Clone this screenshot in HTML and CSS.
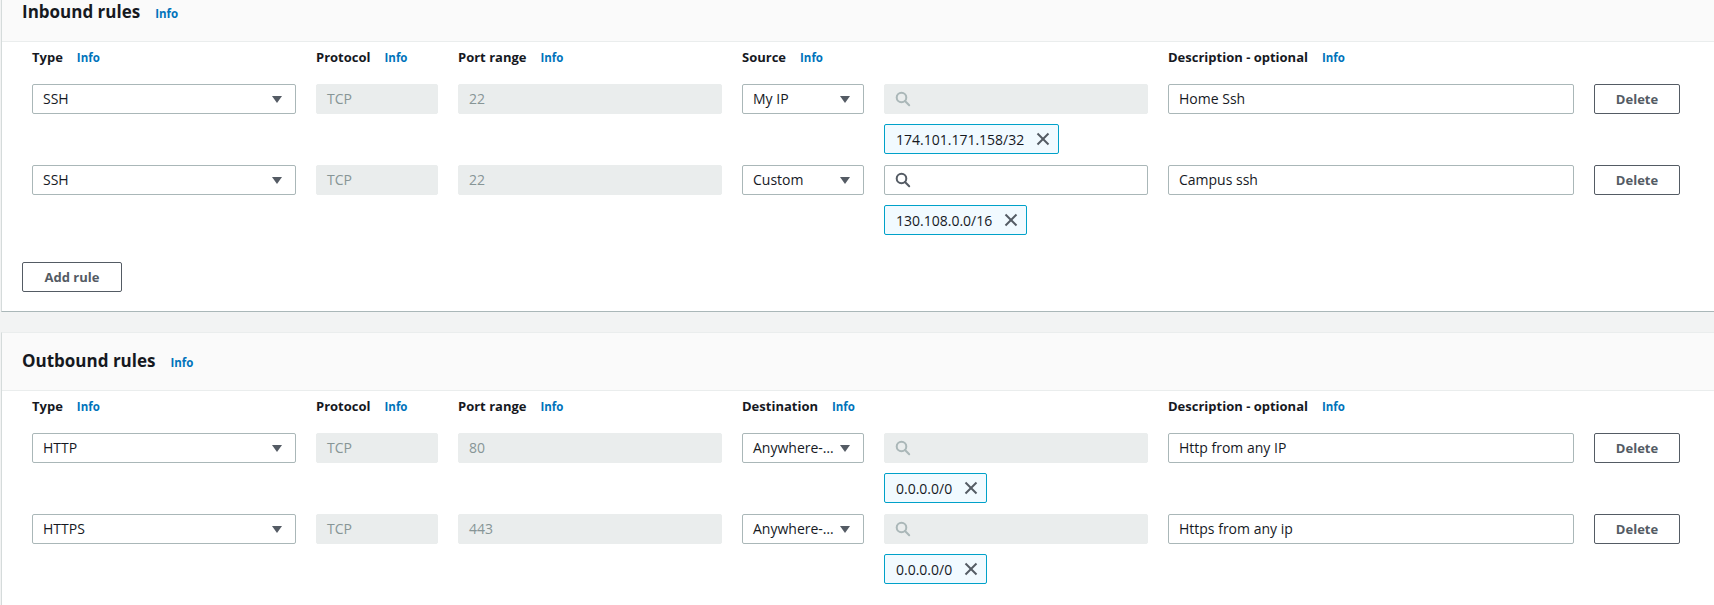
FILE: index.html
```html
<!DOCTYPE html>
<html lang="en">
<head>
<meta charset="utf-8">
<title>Security group rules</title>
<link rel="stylesheet" href="styles.css">
</head>
<body>
<div class="page">
  <section class="panel panel-first">
    <header class="panel-head">
      <h2 class="panel-title">Inbound rules</h2><a class="info info-title">Info</a>
    </header>
    <div class="panel-body">
      <div class="rules">
        <div class="cols labels">
          <div class="label">Type<a class="info">Info</a></div>
          <div class="label">Protocol<a class="info">Info</a></div>
          <div class="label">Port range<a class="info">Info</a></div>
          <div class="label">Source<a class="info">Info</a></div>
          <div></div>
          <div class="label">Description - optional<a class="info">Info</a></div>
          <div></div>
        </div>

        <div class="cols rule">
          <div class="select"><span class="select-text">SSH</span><svg class="caret" width="10" height="7" viewBox="0 0 10 7"><polygon points="0,0 10,0 5,7"/></svg></div>
          <div class="input disabled">TCP</div>
          <div class="input disabled">22</div>
          <div class="select"><span class="select-text">My IP</span><svg class="caret" width="10" height="7" viewBox="0 0 10 7"><polygon points="0,0 10,0 5,7"/></svg></div>
          <div class="search-cell">
            <div class="search disabled"><svg class="mag" width="16" height="16" viewBox="0 0 16 16"><circle cx="6.5" cy="6.5" r="4.8"/><line x1="10" y1="10" x2="14.2" y2="14.2"/></svg></div>
            <div class="chip"><span>174.101.171.158/32</span><svg class="chip-x" width="14" height="14" viewBox="0 0 14 14"><line x1="1.5" y1="1.5" x2="12.5" y2="12.5"/><line x1="12.5" y1="1.5" x2="1.5" y2="12.5"/></svg></div>
          </div>
          <div class="input">Home Ssh</div>
          <button class="btn btn-delete">Delete</button>
        </div>

        <div class="cols rule">
          <div class="select"><span class="select-text">SSH</span><svg class="caret" width="10" height="7" viewBox="0 0 10 7"><polygon points="0,0 10,0 5,7"/></svg></div>
          <div class="input disabled">TCP</div>
          <div class="input disabled">22</div>
          <div class="select"><span class="select-text">Custom</span><svg class="caret" width="10" height="7" viewBox="0 0 10 7"><polygon points="0,0 10,0 5,7"/></svg></div>
          <div class="search-cell">
            <div class="search"><svg class="mag" width="16" height="16" viewBox="0 0 16 16"><circle cx="6.5" cy="6.5" r="4.8"/><line x1="10" y1="10" x2="14.2" y2="14.2"/></svg></div>
            <div class="chip"><span>130.108.0.0/16</span><svg class="chip-x" width="14" height="14" viewBox="0 0 14 14"><line x1="1.5" y1="1.5" x2="12.5" y2="12.5"/><line x1="12.5" y1="1.5" x2="1.5" y2="12.5"/></svg></div>
          </div>
          <div class="input">Campus ssh</div>
          <button class="btn btn-delete">Delete</button>
        </div>
      </div>
      <button class="btn btn-add">Add rule</button>
    </div>
  </section>

  <section class="panel panel-last">
    <header class="panel-head">
      <h2 class="panel-title">Outbound rules</h2><a class="info info-title">Info</a>
    </header>
    <div class="panel-body">
      <div class="rules">
        <div class="cols labels">
          <div class="label">Type<a class="info">Info</a></div>
          <div class="label">Protocol<a class="info">Info</a></div>
          <div class="label">Port range<a class="info">Info</a></div>
          <div class="label">Destination<a class="info">Info</a></div>
          <div></div>
          <div class="label">Description - optional<a class="info">Info</a></div>
          <div></div>
        </div>

        <div class="cols rule">
          <div class="select"><span class="select-text">HTTP</span><svg class="caret" width="10" height="7" viewBox="0 0 10 7"><polygon points="0,0 10,0 5,7"/></svg></div>
          <div class="input disabled">TCP</div>
          <div class="input disabled">80</div>
          <div class="select" title="Anywhere-IPv4"><span class="select-text">Anywhere-…</span><svg class="caret" width="10" height="7" viewBox="0 0 10 7"><polygon points="0,0 10,0 5,7"/></svg></div>
          <div class="search-cell">
            <div class="search disabled"><svg class="mag" width="16" height="16" viewBox="0 0 16 16"><circle cx="6.5" cy="6.5" r="4.8"/><line x1="10" y1="10" x2="14.2" y2="14.2"/></svg></div>
            <div class="chip"><span>0.0.0.0/0</span><svg class="chip-x" width="14" height="14" viewBox="0 0 14 14"><line x1="1.5" y1="1.5" x2="12.5" y2="12.5"/><line x1="12.5" y1="1.5" x2="1.5" y2="12.5"/></svg></div>
          </div>
          <div class="input">Http from any IP</div>
          <button class="btn btn-delete">Delete</button>
        </div>

        <div class="cols rule">
          <div class="select"><span class="select-text">HTTPS</span><svg class="caret" width="10" height="7" viewBox="0 0 10 7"><polygon points="0,0 10,0 5,7"/></svg></div>
          <div class="input disabled">TCP</div>
          <div class="input disabled">443</div>
          <div class="select" title="Anywhere-IPv4"><span class="select-text">Anywhere-…</span><svg class="caret" width="10" height="7" viewBox="0 0 10 7"><polygon points="0,0 10,0 5,7"/></svg></div>
          <div class="search-cell">
            <div class="search disabled"><svg class="mag" width="16" height="16" viewBox="0 0 16 16"><circle cx="6.5" cy="6.5" r="4.8"/><line x1="10" y1="10" x2="14.2" y2="14.2"/></svg></div>
            <div class="chip"><span>0.0.0.0/0</span><svg class="chip-x" width="14" height="14" viewBox="0 0 14 14"><line x1="1.5" y1="1.5" x2="12.5" y2="12.5"/><line x1="12.5" y1="1.5" x2="1.5" y2="12.5"/></svg></div>
          </div>
          <div class="input">Https from any ip</div>
          <button class="btn btn-delete">Delete</button>
        </div>
      </div>
    </div>
  </section>
</div>
</body>
</html>
```

FILE: styles.css
```css
* {
  box-sizing: border-box;
}

html, body {
  margin: 0;
  padding: 0;
  background: #f2f3f3;
  overflow: hidden;
}

body {
  font-family: "Open Sans", "Noto Sans", sans-serif;
  color: #16191f;
  font-size: 14px;
}

.page {
  padding-left: 1px;
  margin-right: -40px;
}

.panel {
  background: #ffffff;
  border-left: 1px solid #d5dbdb;
  border-top: 1px solid #eaeded;
  border-bottom: 1px solid #aab7b8;
  margin-bottom: 20px;
}

.panel-first {
  margin-top: -17px;
}

.panel-head {
  display: flex;
  align-items: baseline;
  background: #fafafa;
  border-bottom: 1px solid #eaeded;
  padding: 17px 20px 18px 20px;
}

.panel-title {
  margin: 0;
  font-size: 17px;
  font-weight: 700;
  line-height: 22px;
  color: #16191f;
}

.info {
  color: #0073bb;
  font-size: 11.5px;
  font-weight: 700;
  line-height: 1;
  margin-left: 14px;
  text-decoration: none;
}

.info-title {
  margin-left: 15px;
}

.panel-body {
  padding: 4px 20px 19px 20px;
}

.panel-last .panel-body {
  padding-bottom: 60px;
}

.rules {
  padding-left: 10px;
  display: flex;
  flex-direction: column;
  gap: 11px;
}

.cols {
  display: grid;
  grid-template-columns: 264px 122px 264px 122px 264px 406px 86px;
  column-gap: 20px;
  align-items: start;
}

.labels {
  margin-bottom: 5px;
}

.label {
  font-size: 13px;
  font-weight: 700;
  line-height: 22px;
  height: 22px;
  white-space: nowrap;
}

.select,
.input,
.search {
  height: 30px;
  border: 1px solid #aab7b8;
  border-radius: 2px;
  background: #ffffff;
  display: flex;
  align-items: center;
  font-size: 14px;
  line-height: 20px;
}

.select {
  padding: 0 13px 0 10px;
}

.select-text {
  flex: 1;
  min-width: 0;
  white-space: nowrap;
  margin-right: 6px;
}

.caret {
  flex: none;
  fill: #545b64;
}

.input {
  padding: 0 10px;
  white-space: nowrap;
}

.input.disabled {
  background: #eaeded;
  border-color: #eaeded;
  color: #879596;
}

.search-cell {
  display: flex;
  flex-direction: column;
  align-items: flex-start;
  gap: 10px;
}

.search {
  width: 100%;
  padding: 0 10px;
}

.search.disabled {
  background: #eaeded;
  border-color: #eaeded;
}

.mag {
  fill: none;
  stroke: #545b64;
  stroke-width: 2;
  stroke-linecap: round;
}

.search.disabled .mag {
  stroke: #aab7b8;
}

.chip {
  height: 30px;
  display: inline-flex;
  align-items: center;
  gap: 12px;
  padding: 0 8px 0 11px;
  border: 1px solid #00a1c9;
  border-radius: 2px;
  background: #f1faff;
  font-size: 14px;
  white-space: nowrap;
}

.chip-x {
  flex: none;
  stroke: #545b64;
  stroke-width: 2;
}

.btn {
  height: 30px;
  border: 1px solid #545b64;
  border-radius: 2px;
  background: #ffffff;
  color: #545b64;
  font-family: "Open Sans", "Noto Sans", sans-serif;
  font-size: 13px;
  font-weight: 700;
  padding: 0;
}

.btn-delete {
  width: 86px;
}

.btn-add {
  display: block;
  width: 100px;
  margin-top: 27px;
}
```
